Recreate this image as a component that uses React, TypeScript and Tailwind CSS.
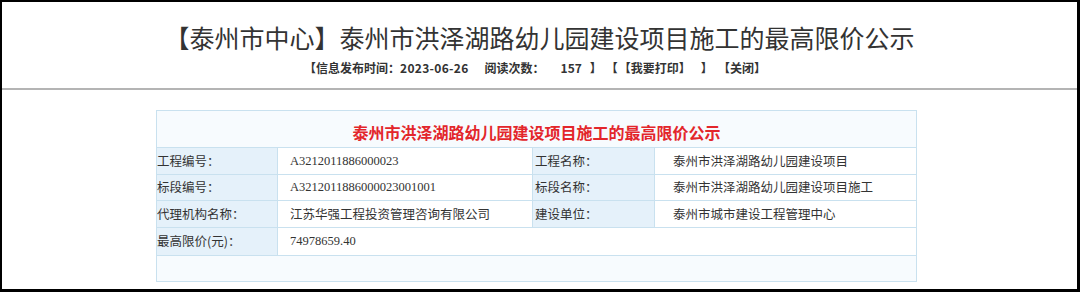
import React from "react";

const cjk = { fontFamily: '"Noto Sans CJK SC", "Noto Sans", sans-serif' };
const serif = { fontFamily: '"Liberation Serif", "Noto Sans CJK SC", serif' };

function Label({ children, second }: { children: React.ReactNode; second?: boolean }) {
  return (
    <div
      className={`bg-[#e5f1fa] border-r border-b border-[#c9e1ef] flex items-center text-[12.5px] text-[#333] ${second ? "pl-[2px]" : "pl-0"}`}
      style={cjk}
    >
      {children}
    </div>
  );
}

function Value({ children, second, mono, span3 }: { children: React.ReactNode; second?: boolean; mono?: boolean; span3?: boolean }) {
  return (
    <div
      className={`bg-white border-r border-b border-[#c9e1ef] flex items-center text-[12.5px] text-[#333] ${second ? "pl-[18px]" : "pl-[12px]"} ${span3 ? "col-span-3" : ""}`}
      style={mono ? serif : cjk}
    >
      {children}
    </div>
  );
}

export default function App() {
  return (
    <div className="w-[1080px] h-[292px] bg-black pt-[2px] pl-[2px] pr-[3px] pb-[3px]">
      <div className="h-full bg-white flex flex-col overflow-hidden">
        <div className="pt-[18px] text-center text-[25px] leading-[34px] text-[#333] whitespace-nowrap" style={cjk}>
          【泰州市中心】泰州市洪泽湖路幼儿园建设项目施工的最高限价公示
        </div>
        <div className="mt-[6px] h-[16px] flex items-center pl-[302px] text-[12px] leading-[16px] font-bold text-[#333] whitespace-nowrap" style={cjk}>
          <span>【信息发布时间：</span>
          <span className="tracking-[0.3px]">2023-06-26</span>
          <span className="ml-[16px]">阅读次数：</span>
          <span className="ml-[16px]">157</span>
          <span className="ml-[8px]">】</span>
          <span className="ml-[4px]">【</span>
          <span className="ml-[1px]">【我要打印】</span>
          <span className="ml-[10px]">】</span>
          <span className="ml-[5px]">【关闭】</span>
        </div>
        <div className="mt-[12px] h-[2px] bg-[#b4b4b4]" />
        <div className="mt-[20px] ml-[154px] w-[761px] grid grid-cols-[121px_255px_122px_262px] grid-rows-[37px_27px_26px_27px_28px_26px] border-l border-t border-[#c9e1ef]">
          <div
            className="col-span-4 bg-[#f7fbfe] border-r border-b border-[#c9e1ef] flex items-center justify-center pt-[5px] text-[16px] font-bold text-[#e3262b] whitespace-nowrap"
            style={cjk}
          >
            泰州市洪泽湖路幼儿园建设项目施工的最高限价公示
          </div>

          <Label>工程编号：</Label>
          <Value mono>A3212011886000023</Value>
          <Label second>工程名称：</Label>
          <Value second>泰州市洪泽湖路幼儿园建设项目</Value>

          <Label>标段编号：</Label>
          <Value mono>A3212011886000023001001</Value>
          <Label second>标段名称：</Label>
          <Value second>泰州市洪泽湖路幼儿园建设项目施工</Value>

          <Label>代理机构名称：</Label>
          <Value>江苏华强工程投资管理咨询有限公司</Value>
          <Label second>建设单位：</Label>
          <Value second>泰州市城市建设工程管理中心</Value>

          <Label>最高限价(元)：</Label>
          <Value mono span3>74978659.40</Value>

          <div className="col-span-4 bg-[#f7fbfe] border-r border-b border-[#c9e1ef]" />
        </div>
      </div>
    </div>
  );
}
